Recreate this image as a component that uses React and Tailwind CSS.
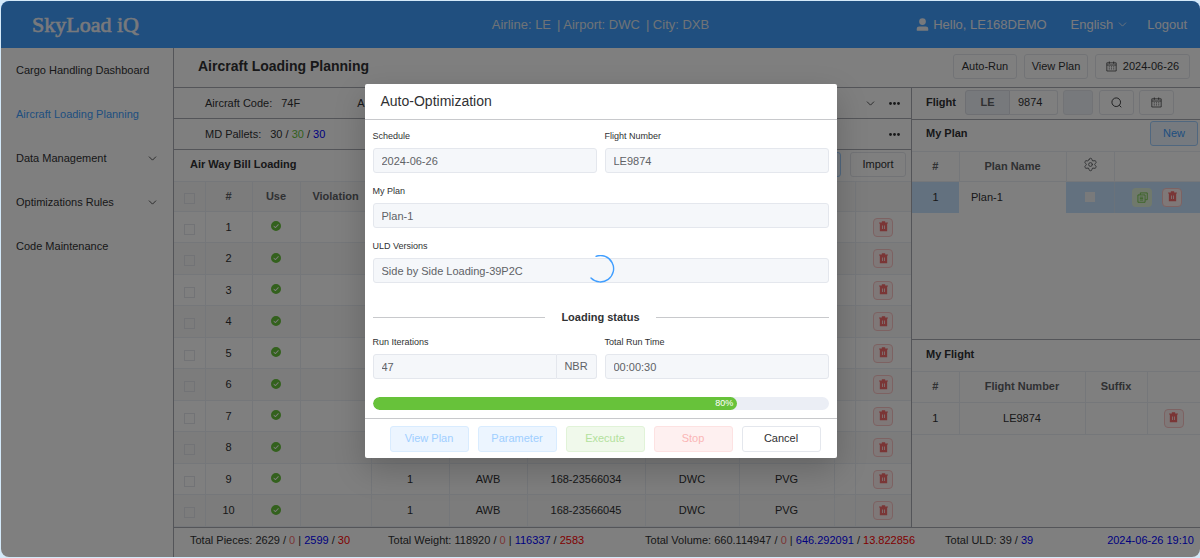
import React, { useState } from 'react';
import clsx from 'clsx';
import { ChevronDown, Settings } from 'lucide-react';

const MENU_ITEMS = [
  { label: 'Cargo Handling Dashboard' },
  { label: 'Aircraft Loading Planning', active: true },
  { label: 'Data Management', children: true },
  { label: 'Optimizations Rules', children: true },
  { label: 'Code Maintenance' },
];

const AWB_ROWS = [
  {},
  {},
  {},
  {},
  {},
  {},
  {},
  {},
  { priority: 1, type: 'AWB', number: '168-23566034', origin: 'DWC', dest: 'PVG' },
  { priority: 1, type: 'AWB', number: '168-23566045', origin: 'DWC', dest: 'PVG' },
];

const TrashIcon = () => (
  <svg className="h-[11px] w-[11px]" viewBox="0 0 12 12" fill="currentColor" aria-hidden="true">
    <path
      fillRule="evenodd"
      d="M4.2 1.5V.4h3.6v1.1h3v1.3H1.2V1.5zM2 2.8h8v8.4H2zM4.4 5v3.8h.9V5zm2.3 0v3.8h.9V5z"
    />
  </svg>
);

const CheckIcon = () => (
  <svg className="mx-auto mb-[2px] h-[10px] w-[10px] text-[#67c23a]" viewBox="64 64 896 896" fill="currentColor" aria-hidden="true">
    <path d="M512 64a448 448 0 1 1 0 896 448 448 0 0 1 0-896m-55.808 536.384-99.52-99.584a38.4 38.4 0 1 0-54.336 54.336l126.72 126.72a38.272 38.272 0 0 0 54.336 0l262.4-262.464a38.4 38.4 0 1 0-54.272-54.336z" />
  </svg>
);

const UserIcon = () => (
  <svg className="h-[13px] w-[13px]" viewBox="96 80 832 864" fill="currentColor" aria-hidden="true">
    <path d="M288 320a224 224 0 1 0 448 0 224 224 0 1 0-448 0m544 608H160a32 32 0 0 1-32-32v-96a160 160 0 0 1 160-160h448a160 160 0 0 1 160 160v96a32 32 0 0 1-32 32z" />
  </svg>
);

const SearchIcon = () => (
  <svg className="h-[11px] w-[11px]" viewBox="0 0 12 12" fill="none" stroke="currentColor" aria-hidden="true">
    <circle cx="5.7" cy="5.7" r="4.7" />
    <path d="M9 9l2.2 2.2" />
  </svg>
);

const CalendarIcon = () => (
  <svg className="h-[11px] w-[11px]" viewBox="0 0 12 12" fill="none" stroke="currentColor" strokeWidth="0.8" aria-hidden="true">
    <path d="M.9 2h10.2v8.9H.9zM.9 4.4h10.2M3.6.5v2.6M8.4.5v2.6" />
    <path d="M3 6.4h6M3 8.6h6" strokeDasharray="1.2 1.2" />
  </svg>
);

const CopyIcon = () => (
  <svg className="h-[11px] w-[11px]" viewBox="0 0 12 12" fill="none" stroke="currentColor" strokeWidth="0.9" aria-hidden="true">
    <path d="M3.6 3V1h7.6v7.4H9M1 3.2h7.8v8H1zM3 5.6h3.8M3 7.2h3.8M3 8.8h3.8" />
  </svg>
);

const DotsIcon = () => (
  <svg className="h-[3px] w-[11px]" viewBox="0 0 11 3" fill="currentColor" aria-hidden="true">
    <circle cx="1.5" cy="1.5" r="1.4" />
    <circle cx="5.5" cy="1.5" r="1.4" />
    <circle cx="9.5" cy="1.5" r="1.4" />
  </svg>
);

const Chevron = () => <ChevronDown className="h-[13px] w-[13px]" strokeWidth={1.5} />;

const DeleteButton = ({ label }) => (
  <button
    type="button"
    aria-label={label}
    className="inline-flex h-[19px] w-5 items-center justify-center rounded border border-[#fbc4c4] bg-[#fef0f0] pb-px align-middle text-[#f56c6c]"
  >
    <TrashIcon />
  </button>
);

const PlainButton = ({ className, primary, children, ...props }) => (
  <button
    type="button"
    className={clsx(
      'flex h-[25px] items-center justify-center rounded-[3px] border',
      primary ? 'border-[#a0cfff] bg-[#ecf5ff] text-[#409eff]' : 'border-[#e4e7ed]',
      className
    )}
    {...props}
  >
    {children}
  </button>
);

const Header = () => (
  <header className="grid h-[47px] shrink-0 grid-cols-[1fr_auto_1fr] items-center bg-[#409eff] text-[13px] text-[#f0f3f8]">
    <div className="pl-[31px] font-['Liberation_Serif',serif] text-[22px] [-webkit-text-stroke:0.6px_#f0f3f8]">SkyLoad iQ</div>
    <div className="flex gap-[6px] text-[#dfe6ee]">
      <span>Airline: LE</span>
      <span>| Airport: DWC</span>
      <span>| City: DXB</span>
    </div>
    <div className="flex items-center justify-end pr-[13px]">
      <UserIcon />
      <span className="ml-1">Hello, LE168DEMO</span>
      <button type="button" className="ml-6 flex items-center gap-[3px]">
        English
        <Chevron />
      </button>
      <a href="#logout" className="ml-[18px]">Logout</a>
    </div>
  </header>
);

const Sidebar = () => (
  <nav className="w-[173px] shrink-0 border-r border-[#a8abb2]">
    {MENU_ITEMS.map((item) => (
      <a
        key={item.label}
        href="#menu"
        className={clsx(
          'flex h-11 items-center justify-between pr-[14px] pl-[15px]',
          item.active ? 'text-[#409eff]' : 'text-[#303133]'
        )}
      >
        {item.label}
        {item.children && <Chevron />}
      </a>
    ))}
  </nav>
);

const AwbTable = () => (
  <table className="w-full table-fixed border-collapse text-center">
    <colgroup>
      <col className="w-[31px]" />
      <col className="w-[47px]" />
      <col className="w-[48px]" />
      <col className="w-[71px]" />
      <col className="w-[78px]" />
      <col className="w-[78px]" />
      <col className="w-[118px]" />
      <col className="w-[94px]" />
      <col className="w-[95px]" />
      <col />
      <col className="w-[56px]" />
    </colgroup>
    <thead>
      <tr className="h-[30px] bg-[#f8f8f9] text-[#606266]">
        <th className="border border-l-0 border-[#ebeef5] pt-1">
          <input type="checkbox" aria-label="Select all" className="block mx-auto h-[11px] w-[11px] appearance-none border border-[#e4e7ed]" />
        </th>
        <th className="border border-[#ebeef5]">#</th>
        <th className="border border-[#ebeef5]">Use</th>
        <th className="border border-[#ebeef5]">Violation</th>
        <th className="border border-[#ebeef5]" aria-label="Priority"></th>
        <th className="border border-[#ebeef5]" aria-label="Type"></th>
        <th className="border border-[#ebeef5]" aria-label="Number"></th>
        <th className="border border-[#ebeef5]" aria-label="Origin"></th>
        <th className="border border-[#ebeef5]" aria-label="Destination"></th>
        <th className="border border-[#ebeef5]"></th>
        <th className="border border-r-0 border-[#ebeef5]"></th>
      </tr>
    </thead>
    <tbody>
      {AWB_ROWS.map((row, i) => (
        <tr key={i} className="h-[31px] even:h-8 even:bg-[#f8f8f8]">
          <td className="border border-l-0 border-[#ebeef5] pt-1">
            <input type="checkbox" aria-label={`Select row ${i + 1}`} className="block mx-auto h-[11px] w-[11px] appearance-none border border-[#e4e7ed]" />
          </td>
          <td className="border border-[#ebeef5]">{i + 1}</td>
          <td className="border border-[#ebeef5]"><CheckIcon /></td>
          <td className="border border-[#ebeef5]"></td>
          <td className="border border-[#ebeef5]">{row.priority}</td>
          <td className="border border-[#ebeef5]">{row.type}</td>
          <td className="border border-[#ebeef5]">{row.number}</td>
          <td className="border border-[#ebeef5]">{row.origin}</td>
          <td className="border border-[#ebeef5]">{row.dest}</td>
          <td className="border border-[#ebeef5]"></td>
          <td className="border border-r-0 border-[#ebeef5]">
            <DeleteButton label={`Delete row ${i + 1}`} />
          </td>
        </tr>
      ))}
    </tbody>
  </table>
);

const LoadingPanel = () => (
  <section className="flex min-w-0 flex-1 flex-col">
    <div className="flex h-[31px] shrink-0 items-center border-b border-[#a8abb2] pr-[11px] pl-[31px]">
      <span>Aircraft Code:</span>
      <span className="ml-[9px]">74F</span>
      <span className="ml-[57px] flex-1">A</span>
      <Chevron />
      <button type="button" aria-label="More aircraft details" className="ml-3"><DotsIcon /></button>
    </div>
    <div className="flex h-[31px] shrink-0 items-center border-b border-[#a8abb2] pr-[11px] pl-[31px]">
      <span>MD Pallets:</span>
      <span className="ml-[9px] flex-1">
        30 / <span className="text-[#67c23a]">30</span> / <span className="text-[#0000ff]">30</span>
      </span>
      <button type="button" aria-label="More pallet details"><DotsIcon /></button>
    </div>
    <div className="flex h-[31px] shrink-0 items-center gap-[9px] pr-[5px] pb-[2px] pl-4">
      <h2 className="flex-1 font-bold">Air Way Bill Loading</h2>
      <PlainButton primary className="w-14" aria-label="New air way bill" />
      <PlainButton className="w-14">Import</PlainButton>
    </div>
    <AwbTable />
  </section>
);

const PlanPanel = () => (
  <aside className="flex w-[289px] shrink-0 flex-col border-l border-[#a8abb2]">
    <div className="flex h-8 shrink-0 items-center border-b border-[#a8abb2] pb-[3px] pl-[14px]">
      <label htmlFor="flight-no" className="w-[39px] font-bold">Flight</label>
      <span className="flex h-[25px] w-[45px] items-center justify-center rounded-l-[3px] border border-[#dcdfe6] bg-[#eff2f8] font-bold text-[#606266]">LE</span>
      <input id="flight-no" defaultValue="9874" className="h-[25px] w-12 rounded-r-[3px] border border-l-0 border-[#e4e7ed] px-2" />
      <input aria-label="Suffix" disabled className="ml-[5px] h-[25px] w-[30px] rounded-[3px] border border-[#e4e7ed] bg-[#eff2f8]" />
      <PlainButton className="ml-[6px] w-[35px]" aria-label="Search flight"><SearchIcon /></PlainButton>
      <PlainButton className="ml-[5px] w-[35px]" aria-label="Pick date"><CalendarIcon /></PlainButton>
    </div>
    <div className="flex h-[31px] shrink-0 items-center justify-between pb-1 pl-[14px] pr-[2px]">
      <h2 className="font-bold">My Plan</h2>
      <PlainButton primary className="w-12">New</PlainButton>
    </div>
    <table className="w-full table-fixed border-collapse text-center">
      <colgroup>
        <col className="w-[47px]" />
        <col className="w-[107px]" />
        <col className="w-12" />
        <col />
      </colgroup>
      <thead>
        <tr className="h-[30px] text-[#606266]">
          <th className="border border-l-0 border-[#ebeef5]">#</th>
          <th className="border border-[#ebeef5]">Plan Name</th>
          <th className="border border-[#ebeef5]">
            <Settings className="mx-auto mb-1 h-[15px] w-[15px]" strokeWidth={1.5} aria-label="Settings" />
          </th>
          <th className="border border-r-0 border-[#ebeef5]"></th>
        </tr>
      </thead>
      <tbody>
        <tr className="h-[31px] bg-[#c6e2ff]">
          <td>1</td>
          <td className="bg-white pl-[12px] text-left">Plan-1</td>
          <td className="border-r border-[#d4e4f5]">
            <input type="checkbox" aria-label="Use Plan-1" className="block mx-auto h-[10px] w-[10px] appearance-none bg-[#f2f4f6]" />
          </td>
          <td>
            <div className="flex items-center justify-end gap-[10px] pr-[18px]">
              <button type="button" aria-label="Copy Plan-1" className="flex h-[19px] w-5 items-center justify-center rounded bg-[#e1f3d8] text-[#67c23a]">
                <CopyIcon />
              </button>
              <DeleteButton label="Delete Plan-1" />
            </div>
          </td>
        </tr>
      </tbody>
    </table>
    <div className="min-h-[126px]" />
    <h2 className="flex h-8 shrink-0 items-center border-t border-[#a8abb2] pb-[2px] pl-[14px] font-bold">My Flight</h2>
    <table className="w-full table-fixed border-collapse text-center">
      <colgroup>
        <col className="w-[47px]" />
        <col className="w-[126px]" />
        <col className="w-[62px]" />
        <col />
      </colgroup>
      <thead>
        <tr className="h-[31px] text-[#606266]">
          <th className="border border-l-0 border-[#ebeef5]">#</th>
          <th className="border border-[#ebeef5]">Flight Number</th>
          <th className="border border-[#ebeef5]">Suffix</th>
          <th className="border border-r-0 border-[#ebeef5]"></th>
        </tr>
      </thead>
      <tbody>
        <tr className="h-8">
          <td className="border border-l-0 border-[#ebeef5]">1</td>
          <td className="border border-[#ebeef5]">LE9874</td>
          <td className="border border-[#ebeef5]"></td>
          <td className="border border-r-0 border-[#ebeef5]"><DeleteButton label="Delete LE9874" /></td>
        </tr>
      </tbody>
    </table>
  </aside>
);

const Total = ({ label, total, left, done, rest }) => (
  <span className="whitespace-nowrap">
    {label}: {total}
    {left && <> / <span className="text-[#f56c6c]">{left}</span> |</>}
    {!left && ' /'} <span className="text-[#0000ff]">{done}</span>
    {rest && <> / <span className="text-[#ff0000]">{rest}</span></>}
  </span>
);

const StatusBar = () => (
  <footer className="grid h-[30px] shrink-0 grid-cols-[198fr_257fr_300fr_162fr_auto] items-center border-t border-[#a8abb2] pr-[6px] pb-1 pl-4">
    <Total label="Total Pieces" total="2629" left="0" done="2599" rest="30" />
    <Total label="Total Weight" total="118920" left="0" done="116337" rest="2583" />
    <Total label="Total Volume" total="660.114947" left="0" done="646.292091" rest="13.822856" />
    <Total label="Total ULD" total="39" done="39" />
    <span className="text-[#0000ff]">2024-06-26 19:10</span>
  </footer>
);

const Field = ({ id, label, value, suffix, className }) => (
  <div className={className}>
    <label htmlFor={id} className="block text-[9px] leading-3 text-[#303133]">{label}</label>
    <div className="mt-[6px] flex">
      <input
        id={id}
        value={value}
        readOnly
        className={clsx(
          'h-[25px] w-full min-w-0 border border-[#e4e7ed] bg-[#f5f7fa] px-2 text-[#606266] outline-none',
          suffix ? 'rounded-l-[3px]' : 'rounded-[3px]'
        )}
      />
      {suffix && (
        <span className="flex w-10 shrink-0 items-center justify-center rounded-r-[3px] border border-l-0 border-[#e4e7ed] bg-[#f5f7fa] text-[#606266]">
          {suffix}
        </span>
      )}
    </div>
  </div>
);

const ModalButton = ({ className, ...props }) => (
  <button type="button" className={clsx('h-[26px] w-[79px] rounded-[3px] border', className)} {...props} />
);

const OptimizationModal = ({ progress, onCancel }) => (
  <div className="absolute inset-0 flex items-start justify-center bg-black/50">
    <div
      role="dialog"
      aria-labelledby="modal-title"
      className="relative mt-[83px] w-[472px] rounded-[2px] bg-white shadow-[0_12px_32px_rgba(0,0,0,0.2)]"
    >
      <h2 id="modal-title" className="flex h-9 items-center border-b border-[#c8c9cc] px-4 text-[14px] text-[#303133]">
        Auto-Optimization
      </h2>
      <div className="grid grid-cols-2 gap-x-2 gap-y-3 px-2 pt-[10px]">
        <Field id="schedule" label="Schedule" value="2024-06-26" />
        <Field id="flight" label="Flight Number" value="LE9874" />
        <Field id="plan" label="My Plan" value="Plan-1" className="col-span-2" />
        <Field id="uld" label="ULD Versions" value="Side by Side Loading-39P2C" className="col-span-2" />
      </div>
      <div className="mt-[26px] flex items-center gap-4 px-2">
        <span className="h-px flex-1 bg-[#c8c9cc]" />
        <span className="leading-4 font-bold text-[#303133]">Loading status</span>
        <span className="h-px flex-1 bg-[#c8c9cc]" />
      </div>
      <div className="mt-[11px] grid grid-cols-2 gap-2 px-2">
        <Field id="iterations" label="Run Iterations" value="47" suffix="NBR" />
        <Field id="run-time" label="Total Run Time" value="00:00:30" />
      </div>
      <div className="mx-2 mt-[18px] h-[13px] overflow-hidden rounded-full bg-[#ebeef5]">
        <div
          className="h-full rounded-full bg-[#67c23a] pr-1 text-right text-[9px] leading-[13px] text-white"
          style={{ width: `${progress}%` }}
        >
          {progress}%
        </div>
      </div>
      <div className="mt-2 flex h-10 items-center justify-center gap-[9px] border-t border-[#c8c9cc] pl-[9px]">
        <ModalButton disabled className="border-[#d9ecff] bg-[#ecf5ff] text-[#a0cfff]">View Plan</ModalButton>
        <ModalButton disabled className="border-[#d9ecff] bg-[#ecf5ff] text-[#a0cfff]">Parameter</ModalButton>
        <ModalButton disabled className="border-[#e1f3d8] bg-[#f0f9eb] text-[#b3e19d]">Execute</ModalButton>
        <ModalButton disabled className="border-[#fde2e2] bg-[#fef0f0] text-[#fab6b6]">Stop</ModalButton>
        <ModalButton onClick={onCancel} className="border-[#e4e7ed] text-[#303133]">Cancel</ModalButton>
      </div>
      {/* Loading spinner over the form */}
      <div className="pointer-events-none absolute inset-0 flex items-center justify-center pb-1">
        <svg className="h-7 w-7 text-[#409eff]" viewBox="0 0 28 28" fill="none" stroke="currentColor" strokeWidth="1.4" strokeLinecap="round" aria-hidden="true">
          <path d="M9 1.3A13.2 13.2 0 1 1 4 23" />
        </svg>
      </div>
    </div>
  </div>
);

const App = () => {
  const [modalOpen, setModalOpen] = useState(true);

  return (
    <div className="flex min-h-screen bg-[#d4e9f9] py-px pl-px font-['Liberation_Sans',Arial,sans-serif] text-[11px] text-[#303133]">
      <div className="relative flex min-w-0 flex-1 flex-col overflow-hidden rounded-lg bg-white">
        <Header />
        <div className="flex flex-1">
          <Sidebar />
          <main className="flex min-w-0 flex-1 flex-col">
            <div className="flex h-10 shrink-0 items-center gap-[7px] border-b border-[#a8abb2] pr-[10px] pb-[3px] pl-6">
              <h1 className="flex-1 text-[14px] font-bold">Aircraft Loading Planning</h1>
              <PlainButton className="w-16">Auto-Run</PlainButton>
              <PlainButton className="w-16">View Plan</PlainButton>
              <PlainButton className="w-[95px] gap-[6px]">
                <CalendarIcon />
                2024-06-26
              </PlainButton>
            </div>
            <div className="flex flex-1">
              <LoadingPanel />
              <PlanPanel />
            </div>
            <StatusBar />
          </main>
        </div>
        {modalOpen && <OptimizationModal progress={80} onCancel={() => setModalOpen(false)} />}
      </div>
    </div>
  );
};

export default App;
